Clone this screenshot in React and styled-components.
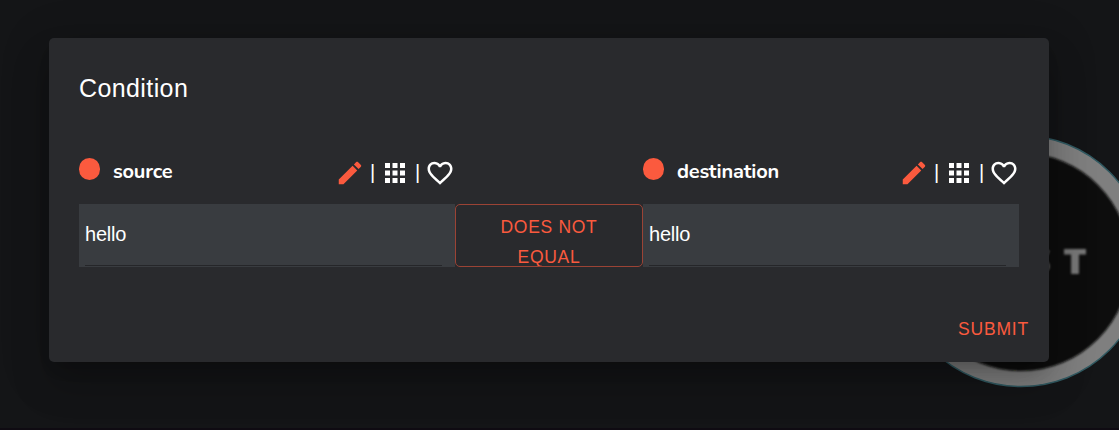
import React from "react";
import styled, { createGlobalStyle } from "styled-components";

const GlobalStyle = createGlobalStyle`
  * { box-sizing: border-box; }
  html, body { margin: 0; height: 100%; overflow: hidden; background: #141517; }
  body { font-family: "Liberation Sans", sans-serif; color: #fff; }
`;

const Page = styled.main`
  position: relative;
  height: 430px;
  padding: 38px 0 0 49px;
  overflow: hidden;
  background: #141517;
  border-bottom: 2px solid #0f0b12;
`;

const Backdrop = styled.svg`
  position: absolute;
  left: 889px;
  top: 130px;
`;

const Dialog = styled.section`
  position: relative;
  display: flex;
  flex-direction: column;
  width: 1000px;
  height: 324px;
  padding: 34px 30px 0;
  border-radius: 5px;
  background: #292a2d;
  box-shadow: 0 11px 15px -7px rgba(0, 0, 0, 0.2), 0 24px 38px 3px rgba(0, 0, 0, 0.14),
    0 9px 46px 8px rgba(0, 0, 0, 0.12);
`;

const Title = styled.h2`
  margin: 0;
  font-size: 25px;
  font-weight: 400;
  line-height: 32px;
  letter-spacing: 0.4px;
`;

const Columns = styled.div`
  display: grid;
  grid-template-columns: 376px 188px 376px;
  align-items: end;
  margin-top: 52px;
`;

const Header = styled.div`
  display: flex;
  align-items: flex-start;
  height: 48px;
  padding-top: 2px;
`;

const Dot = styled.span`
  width: 21px;
  height: 22px;
  border-radius: 10.5px;
  background: #fb5a3e;
`;

const Name = styled.span`
  flex: 1;
  margin-left: 13px;
  font: 700 20px/27px "Nunito", "Lato", sans-serif;
  letter-spacing: -0.22px;
`;

const Actions = styled.div`
  display: flex;
  align-items: center;
  height: 30px;
`;

const Separator = styled.span`
  width: 15px;
  height: 30px;
  font-size: 20px;
  line-height: 28px;
  text-align: center;
`;

const Icon = styled.svg`
  width: 30px;
  height: 30px;
  fill: ${(p) => p.$color || "#fff"};
`;

const Field = styled.div`
  display: flex;
  flex-direction: column;
  height: 63px;
  padding: 0 13px 1px 6px;
  background: #393c40;
`;

const Value = styled.span`
  flex: 1;
  font-size: 20px;
  line-height: 60px;
  letter-spacing: -0.2px;
`;

const Underline = styled.span`
  height: 1px;
  background: #252629;
`;

const Operator = styled.button`
  display: block;
  height: 63px;
  padding: 7px 38px 0;
  overflow: hidden;
  border: 1px solid #9b4335;
  border-radius: 5px;
  background: transparent;
  color: #fb5a3e;
  font: 400 17.5px/30px "Liberation Sans", sans-serif;
  letter-spacing: 0.7px;
  text-align: center;
`;

const OperatorLabel = styled.span`
  display: block;
  height: 60px;
`;

const Submit = styled.button`
  align-self: flex-end;
  margin: 47px -10px 0 0;
  padding: 0;
  border: 0;
  background: transparent;
  color: #fb5a3e;
  font: 400 17.5px/30px "Liberation Sans", sans-serif;
  letter-spacing: 0.8px;
`;

function Operand({ name, value }) {
  return (
    <div>
      <Header>
        <Dot />
        <Name>{name}</Name>
        <Actions>
          <Icon viewBox="0 0 24 24" $color="#fb5a3e">
            <path d="M20.71,7.04C21.1,6.65 21.1,6 20.71,5.63L18.37,3.29C18,2.9 17.35,2.9 16.96,3.29L15.12,5.12L18.87,8.87M3,17.25V21H6.75L17.81,9.93L14.06,6.18L3,17.25Z" />
          </Icon>
          <Separator>|</Separator>
          <Icon viewBox="0 0 24 24">
            <path d="M16,20H20V16H16M16,14H20V10H16M10,8H14V4H10M16,8H20V4H16M10,14H14V10H10M4,14H8V10H4M4,20H8V16H4M10,20H14V16H10M4,8H8V4H4V8Z" />
          </Icon>
          <Separator>|</Separator>
          <Icon viewBox="0 0 24 24">
            <path d="M12.1,18.55L12,18.65L11.89,18.55C7.14,14.24 4,11.39 4,8.5C4,6.5 5.5,5 7.5,5C9.04,5 10.54,6 11.07,7.36H12.93C13.46,6 14.96,5 16.5,5C18.5,5 20,6.5 20,8.5C20,11.39 16.86,14.24 12.1,18.55M16.5,3C14.76,3 13.09,3.81 12,5.08C10.91,3.81 9.24,3 7.5,3C4.42,3 2,5.41 2,8.5C2,12.27 5.4,15.36 10.55,20.03L12,21.35L13.45,20.03C18.6,15.36 22,12.27 22,8.5C22,5.41 19.58,3 16.5,3Z" />
          </Icon>
        </Actions>
      </Header>
      <Field>
        <Value>{value}</Value>
        <Underline />
      </Field>
    </div>
  );
}

export default function App() {
  return (
    <>
      <GlobalStyle />
      <Page>
        <Backdrop width="270" height="264" viewBox="889 130 270 264">
          <defs>
            <filter id="soft">
              <feGaussianBlur stdDeviation="1" />
            </filter>
          </defs>
          <circle cx="1021" cy="261" r="125.5" fill="#7f7f7f" stroke="#315a62" strokeWidth="1.5" />
          <circle cx="1021" cy="262" r="109" fill="#0a0b09" filter="url(#soft)" />
          <text x="1063" y="273.5" fill="#777" fontFamily="Open Sans, sans-serif" fontWeight="800" fontSize="36" textLength="24" lengthAdjust="spacingAndGlyphs" filter="url(#soft)">T</text>
          <text x="1029" y="273.5" fill="#666" fontFamily="Open Sans, sans-serif" fontWeight="800" fontSize="36" textLength="22" lengthAdjust="spacingAndGlyphs" filter="url(#soft)">S</text>
        </Backdrop>
        <Dialog>
          <Title>Condition</Title>
          <Columns>
            <Operand name="source" value="hello" />
            <Operator>
              <OperatorLabel>DOES NOT EQUAL</OperatorLabel>
            </Operator>
            <Operand name="destination" value="hello" />
          </Columns>
          <Submit>SUBMIT</Submit>
        </Dialog>
      </Page>
    </>
  );
}
